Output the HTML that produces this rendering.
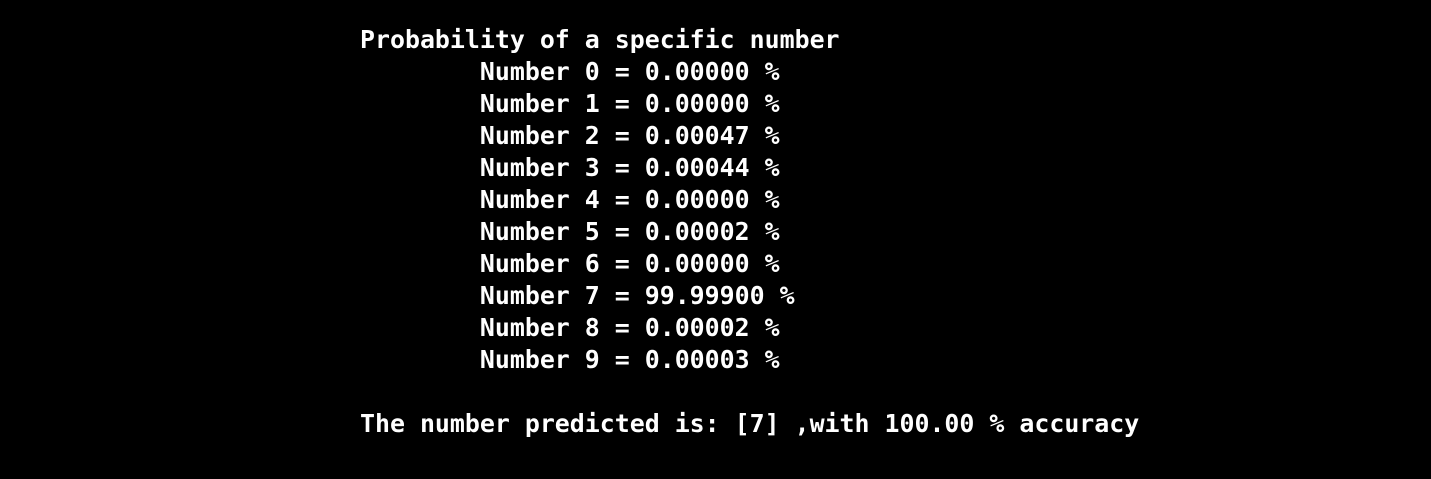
<!DOCTYPE html>
<html><head><meta charset="utf-8"><style>
html,body{margin:0;padding:0;background:#000;width:1431px;height:479px;overflow:hidden}
pre{position:absolute;left:360px;top:24px;margin:0;color:#fff;font-family:"DejaVu Sans Mono","Liberation Mono",monospace;font-size:24.9px;line-height:32px;font-weight:bold}
</style></head><body>
<pre>Probability of a specific number
        Number 0 = 0.00000 %
        Number 1 = 0.00000 %
        Number 2 = 0.00047 %
        Number 3 = 0.00044 %
        Number 4 = 0.00000 %
        Number 5 = 0.00002 %
        Number 6 = 0.00000 %
        Number 7 = 99.99900 %
        Number 8 = 0.00002 %
        Number 9 = 0.00003 %

The number predicted is: [7] ,with 100.00 % accuracy</pre>
</body></html>
